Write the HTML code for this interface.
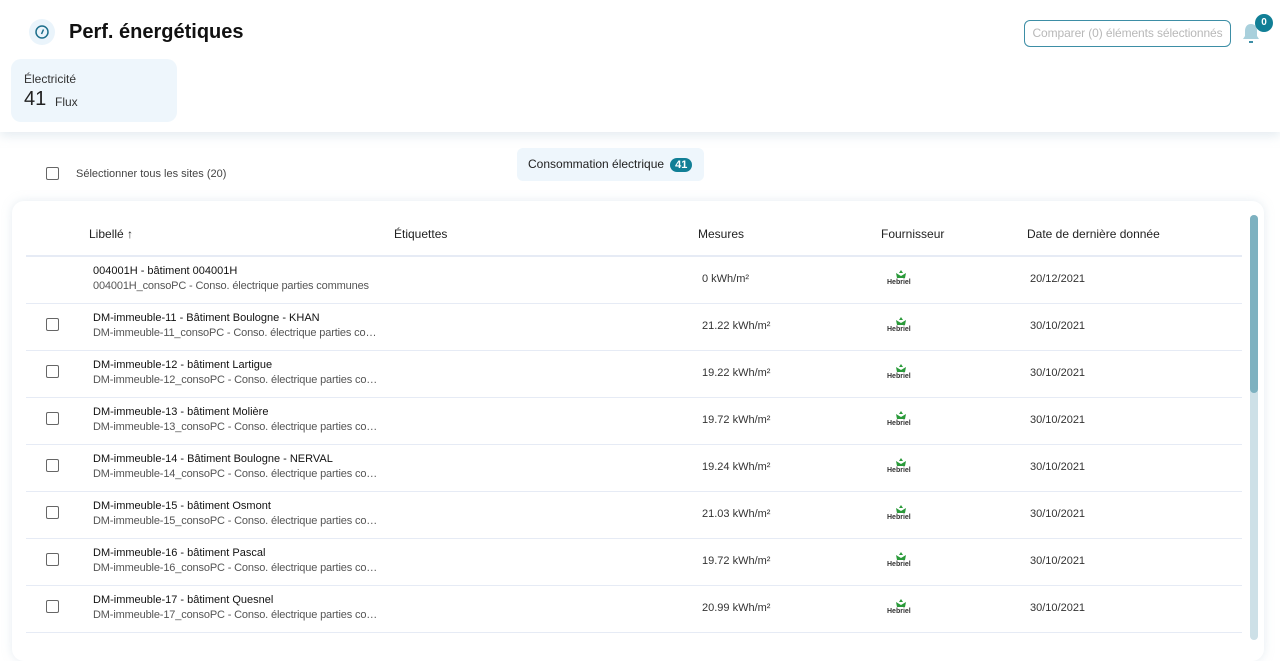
<!DOCTYPE html>
<html><head><meta charset="utf-8"><style>
*{box-sizing:border-box;margin:0;padding:0}
body{width:1280px;height:640px;overflow:hidden;background:#fff;font-family:"Liberation Sans",sans-serif;color:#1d1d1d;position:relative}
.hdr{position:absolute;left:0;top:0;width:1280px;height:132px;background:#fff;box-shadow:0 4px 10px rgba(180,200,215,.35)}
.ic{position:absolute;left:29px;top:19px;width:26px;height:26px;border-radius:50%;background:#eaf4fb}
h1{position:absolute;left:69px;top:21px;font-size:20px;font-weight:bold;color:#111}
.card{position:absolute;left:11px;top:59px;width:166px;height:63px;border-radius:10px;background:#eef6fc}
.card .a{position:absolute;left:13px;top:13px;font-size:12px;color:#333}
.card .b{position:absolute;left:13px;top:29px;font-size:20px;color:#222}
.card .c{position:absolute;left:44px;top:36px;font-size:12px;color:#333}
.btn{position:absolute;left:1024px;top:20px;width:207px;height:27px;border:1px solid #3d8ea6;border-radius:6px;font-size:12px;color:#b8b8b8;text-align:center;line-height:25px;letter-spacing:-0.1px}
.badge{position:absolute;left:1255px;top:14px;width:18px;height:18px;border-radius:50%;background:#117f96;color:#fff;font-size:10px;font-weight:bold;text-align:center;line-height:18px}
.cb{position:absolute;width:13px;height:13px;border:1.5px solid #666;border-radius:2px}
.sel{position:absolute;left:76px;top:168px;font-size:11px;color:#444}
.tab{position:absolute;left:517px;top:148px;width:187px;height:33px;border-radius:6px;background:#eef6fc;font-size:12px;color:#222;padding:9px 0 0 11px}
.tab span{display:inline-block;margin-left:6px;background:#117f96;color:#fff;font-weight:bold;font-size:11px;border-radius:8px;padding:1px 5px}
.tbl{position:absolute;left:12px;top:201px;width:1252px;height:460px;border-radius:12px;background:#fff;box-shadow:0 0 10px rgba(180,200,215,.35)}
.th{position:absolute;top:227px;font-size:12px;color:#222}
.sep{position:absolute;left:26px;width:1216px;height:1px;background:#e6ebf5}
.r1{position:absolute;left:93px;font-size:11px;color:#111}
.r2{position:absolute;left:93px;font-size:11px;color:#555;letter-spacing:-0.15px}
.m{position:absolute;left:702px;font-size:11px;color:#333}
.d{position:absolute;left:1030px;font-size:11px;color:#333}
.logo{position:absolute;left:887px;width:28px;height:16px}
.track{position:absolute;left:1250px;top:215px;width:8px;height:425px;background:#cde0e7;border-radius:4px}
.thumb{position:absolute;left:1250px;top:215px;width:8px;height:178px;background:#7db1c0;border-radius:4px}
</style></head><body>
<div class="hdr">
<div class="ic"><svg width="26" height="26" viewBox="0 0 26 26"><circle cx="13" cy="13" r="6" fill="none" stroke="#1e6f8c" stroke-width="1.5"/><path d="M14.5 10.5L12.5 15" stroke="#1e6f8c" stroke-width="1.5"/></svg></div>
<h1>Perf. énergétiques</h1>
<div class="card"><div class="a">Électricité</div><div class="b">41</div><div class="c">Flux</div></div>
<div class="btn">Comparer (0) éléments sélectionnés</div>
<svg style="position:absolute;left:1240px;top:22px" width="22" height="24" viewBox="0 0 22 24"><path d="M11 2c-4 0-6 3-6 7v5l-2 3h16l-2-3V9c0-4-2-7-6-7z" fill="#a9d0dc"/><rect x="9" y="19" width="4" height="2" fill="#3d8ea6"/></svg>
<div class="badge">0</div>
</div>
<div class="cb" style="left:46px;top:167px"></div>
<div class="sel">Sélectionner tous les sites (20)</div>
<div class="tab">Consommation électrique<span>41</span></div>
<div class="tbl"></div>
<div class="th" style="left:89px">Libellé ↑</div>
<div class="th" style="left:394px">Étiquettes</div>
<div class="th" style="left:698px">Mesures</div>
<div class="th" style="left:881px">Fournisseur</div>
<div class="th" style="left:1027px">Date de dernière donnée</div>
<div class="sep" style="top:255px;height:2px"></div>
<div id="rows"></div>
<div class="track"></div><div class="thumb"></div>
<script>
var R=[["004001H - bâtiment 004001H","004001H_consoPC - Conso. électrique parties communes","0 kWh/m²","20/12/2021",0],
["DM-immeuble-11 - Bâtiment Boulogne - KHAN","DM-immeuble-11_consoPC - Conso. électrique parties co…","21.22 kWh/m²","30/10/2021",1],
["DM-immeuble-12 - bâtiment Lartigue","DM-immeuble-12_consoPC - Conso. électrique parties co…","19.22 kWh/m²","30/10/2021",1],
["DM-immeuble-13 - bâtiment Molière","DM-immeuble-13_consoPC - Conso. électrique parties co…","19.72 kWh/m²","30/10/2021",1],
["DM-immeuble-14 - Bâtiment Boulogne - NERVAL","DM-immeuble-14_consoPC - Conso. électrique parties co…","19.24 kWh/m²","30/10/2021",1],
["DM-immeuble-15 - bâtiment Osmont","DM-immeuble-15_consoPC - Conso. électrique parties co…","21.03 kWh/m²","30/10/2021",1],
["DM-immeuble-16 - bâtiment Pascal","DM-immeuble-16_consoPC - Conso. électrique parties co…","19.72 kWh/m²","30/10/2021",1],
["DM-immeuble-17 - bâtiment Quesnel","DM-immeuble-17_consoPC - Conso. électrique parties co…","20.99 kWh/m²","30/10/2021",1]];
var h="";R.forEach(function(r,i){var y=256+i*47;
h+='<div class="r1" style="top:'+(y+9)+'px">'+r[0]+'</div><div class="r2" style="top:'+(y+24)+'px">'+r[1]+'</div><div class="m" style="top:'+(y+17)+'px">'+r[2]+'</div><div class="d" style="top:'+(y+17)+'px">'+r[3]+'</div>';
h+='<svg class="logo" style="top:'+(y+13)+'px" viewBox="0 0 28 16"><path d="M14 1l2 3h-4zM9 4l5 3 5-3-1 5h-8z" fill="#2a9a3a"/><text x="0" y="15" font-size="7" font-weight="bold" fill="#333" font-family="Liberation Sans">Hebriel</text></svg>';
if(r[4])h+='<div class="cb" style="left:46px;top:'+(y+15)+'px"></div>';
h+='<div class="sep" style="top:'+(y+47)+'px"></div>';});
document.getElementById("rows").innerHTML=h;
</script>
</body></html>
